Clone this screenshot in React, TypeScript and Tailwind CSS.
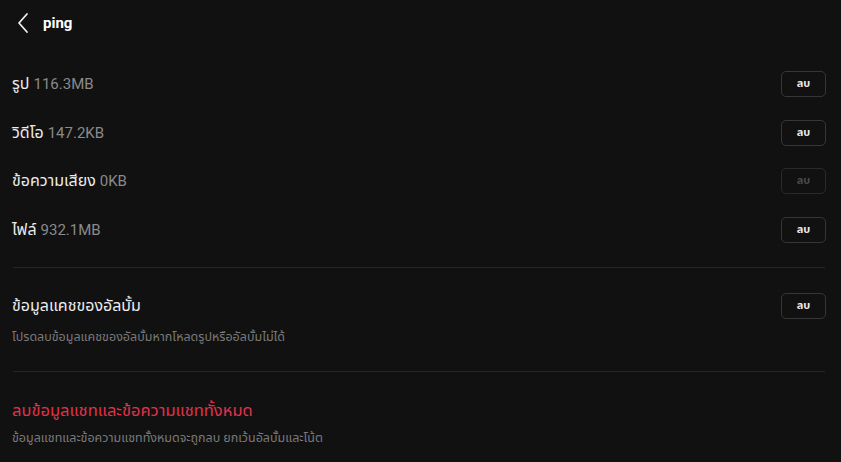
import React from "react";

function DelBtn({ disabled }: { disabled?: boolean }) {
  return (
    <button
      className={
        disabled
          ? "w-[45px] h-[26px] rounded-[5px] border border-[#2a2a2a] text-[11px] font-bold text-[#4a4a4a] flex items-center justify-center"
          : "w-[45px] h-[26px] rounded-[5px] border border-[#363636] text-[11px] font-bold text-[#e8e8e8] flex items-center justify-center"
      }
    >
      ลบ
    </button>
  );
}

function Row({ label, size, disabled }: { label: string; size: string; disabled?: boolean }) {
  return (
    <div className="h-[48.5px] flex items-center justify-between">
      <div className="text-[16px] text-[#ececec]">
        {label} <span className="text-[#8a8a8a] text-[15px]">{size}</span>
      </div>
      <DelBtn disabled={disabled} />
    </div>
  );
}

export default function App() {
  return (
    <div
      className="w-[841px] h-[462px] bg-[#111111] overflow-hidden"
      style={{ fontFamily: 'Roboto, "Noto Sans Thai", "Noto Sans", sans-serif' }}
    >
      <div className="h-[46px] flex items-center pl-[16px]">
        <svg width="14" height="22" viewBox="0 0 14 22" fill="none">
          <path d="M11 2 L3 11 L11 20" stroke="#eeeeee" strokeWidth="1.8" strokeLinecap="round" strokeLinejoin="round" />
        </svg>
        <span className="ml-[13px] text-[15px] font-bold text-white">ping</span>
      </div>
      <div className="pl-[12px] pr-[15px]">
        <div className="pt-[14px]">
          <Row label="รูป" size="116.3MB" />
          <Row label="วิดีโอ" size="147.2KB" />
          <Row label="ข้อความเสียง" size="0KB" disabled />
          <Row label="ไฟล์" size="932.1MB" />
        </div>
        <div className="mt-[13px] ml-[1px] mr-[1px] h-px bg-[#262626]" />
        <div className="flex items-start justify-between pt-[25px] pb-[25px]">
          <div>
            <div className="text-[16px] text-[#ececec] leading-[26px]">ข้อมูลแคชของอัลบั้ม</div>
            <div className="mt-[9px] text-[12.5px] leading-[18px] text-[#7a7a7a]">โปรดลบข้อมูลแคชของอัลบั้มหากโหลดรูปหรืออัลบั้มไม่ได้</div>
          </div>
          <DelBtn />
        </div>
        <div className="ml-[1px] mr-[1px] h-px bg-[#262626]" />
        <div className="pt-[26px]">
          <div className="text-[16.5px] text-[#e0324a] leading-[26px]">ลบข้อมูลแชทและข้อความแชททั้งหมด</div>
          <div className="mt-[5px] text-[12.5px] leading-[18px] text-[#7a7a7a]">ข้อมูลแชทและข้อความแชททั้งหมดจะถูกลบ ยกเว้นอัลบั้มและโน้ต</div>
        </div>
      </div>
    </div>
  );
}
